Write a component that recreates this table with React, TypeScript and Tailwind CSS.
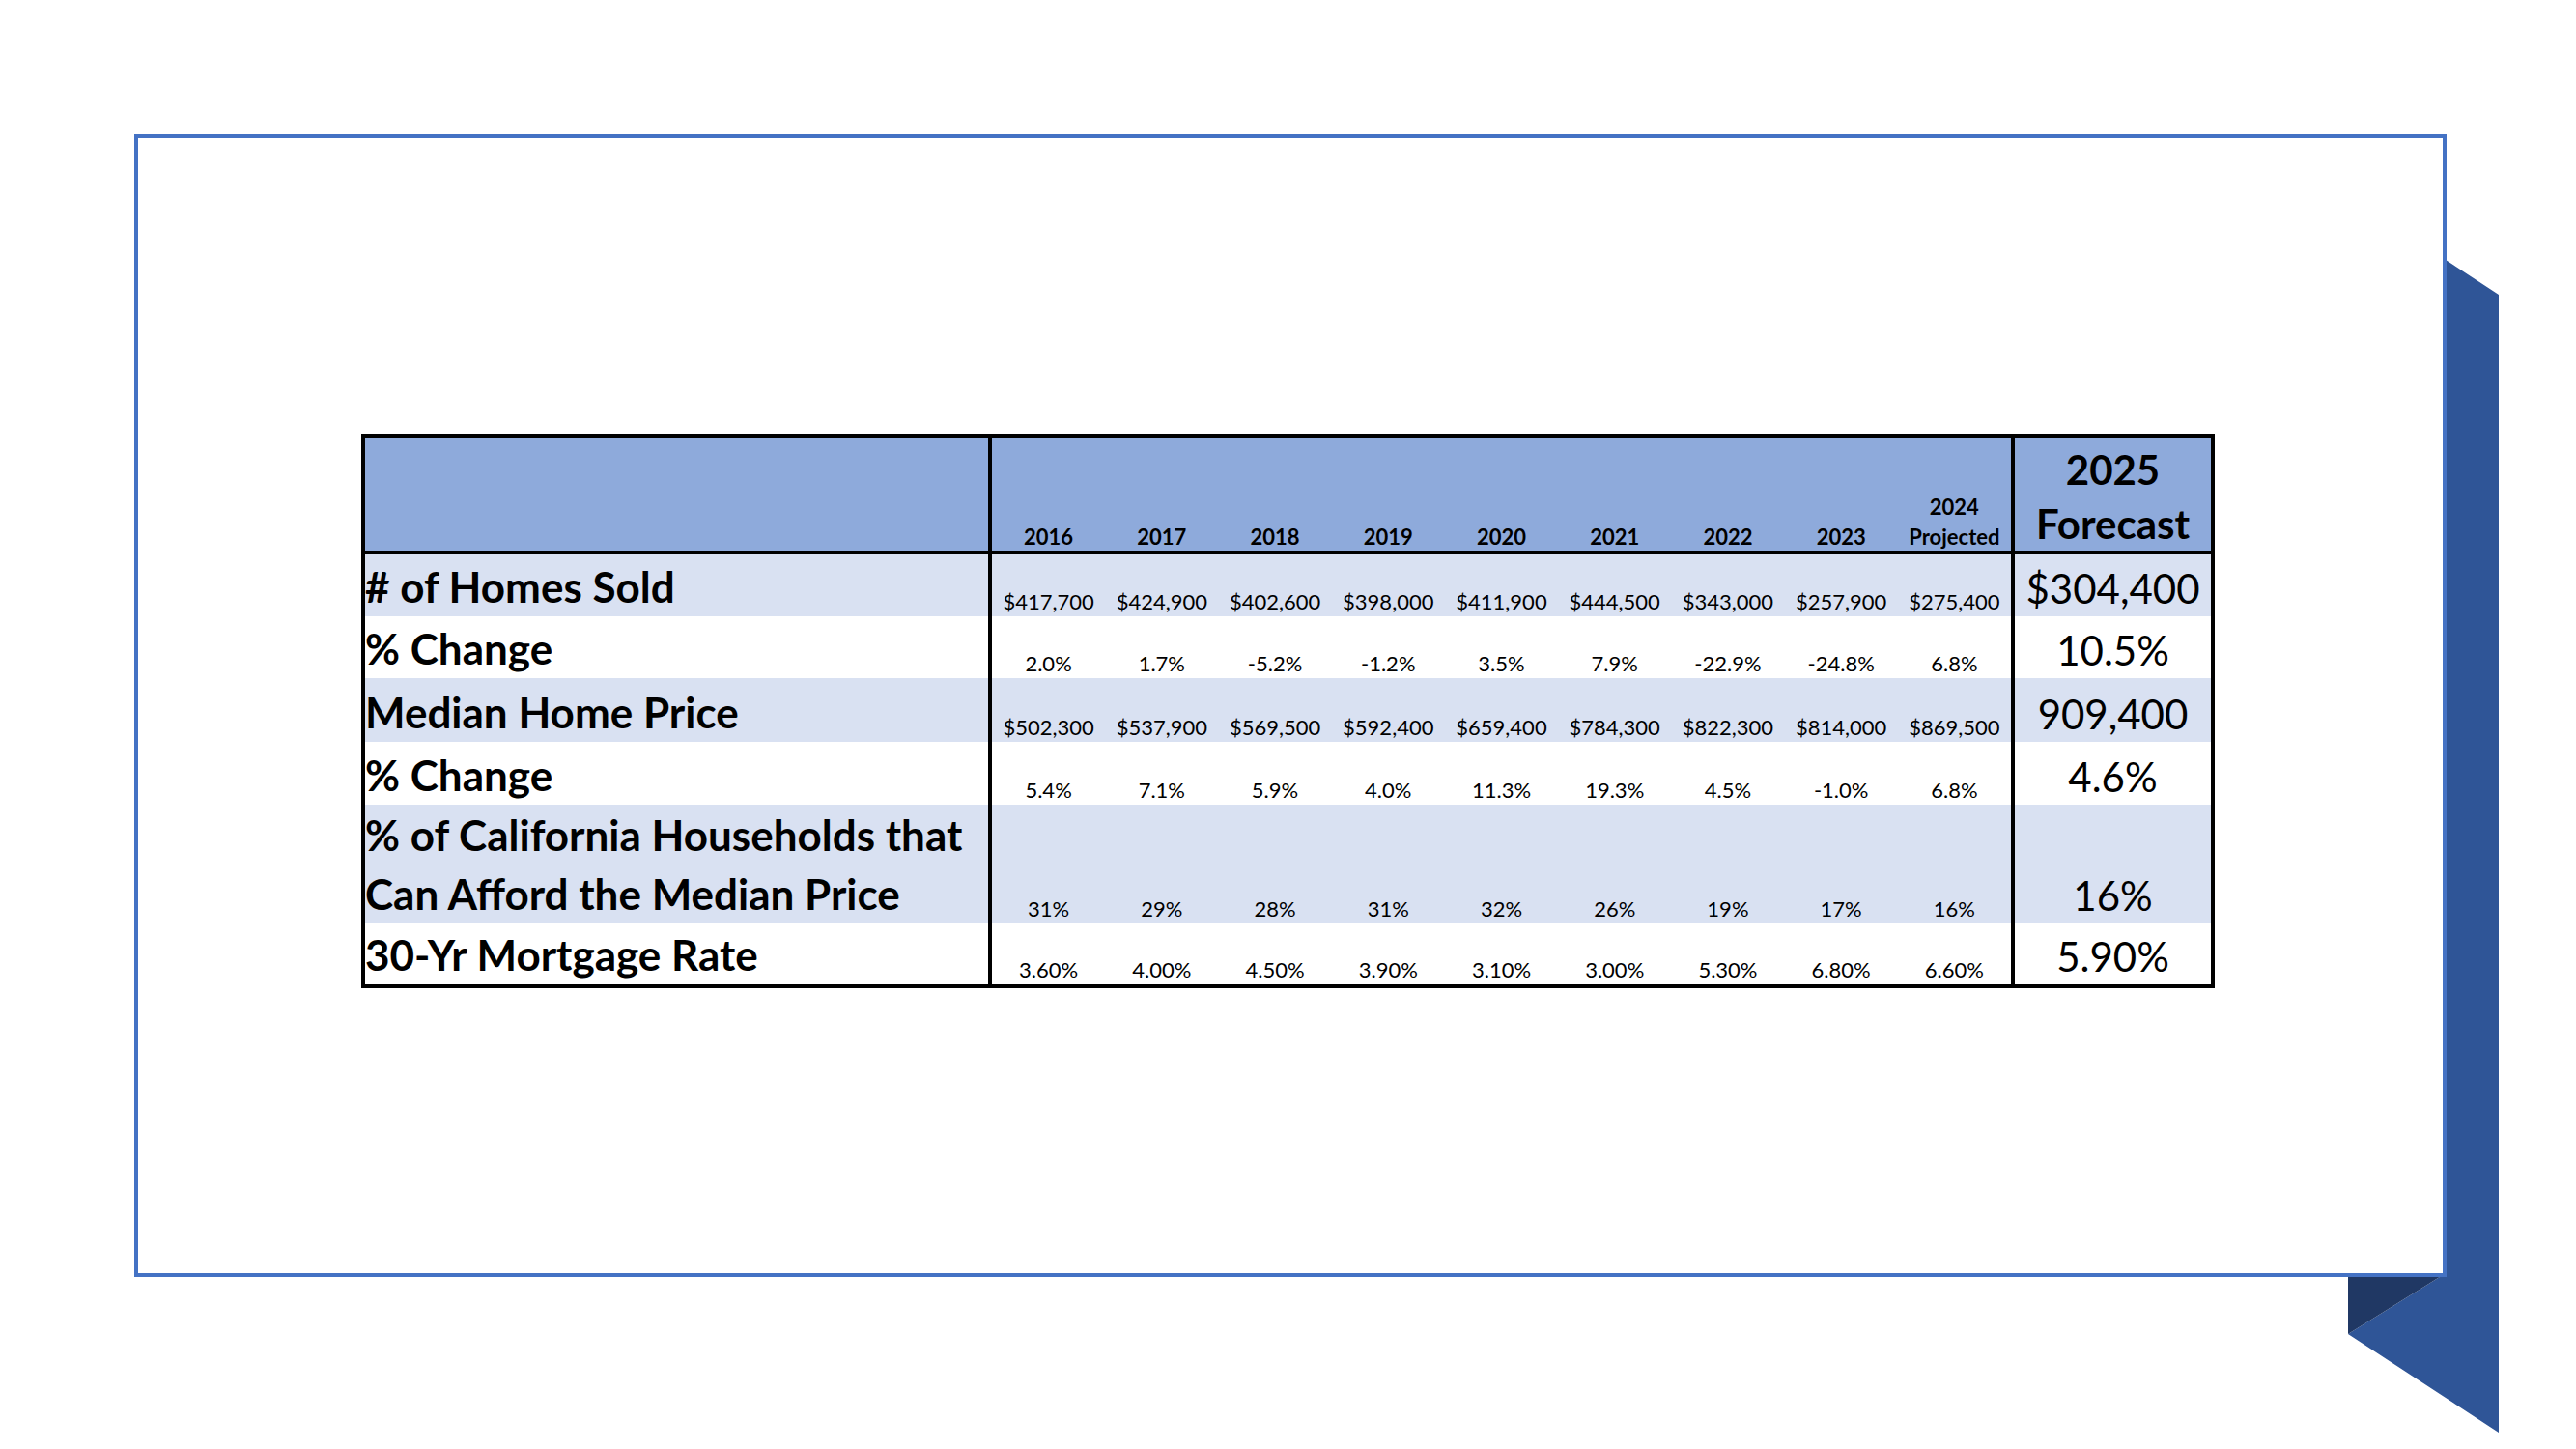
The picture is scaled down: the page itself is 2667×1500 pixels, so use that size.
import React from "react";

type Row = {
  label: string[];
  values: string[];
  forecast: string;
  bg: string;
  h: string;
};

const rows: Row[] = [
  {
    label: ["# of Homes Sold"],
    values: ["$417,700", "$424,900", "$402,600", "$398,000", "$411,900", "$444,500", "$343,000", "$257,900", "$275,400"],
    forecast: "$304,400",
    bg: "bg-[#d9e1f2]",
    h: "h-[64px]",
  },
  {
    label: ["% Change"],
    values: ["2.0%", "1.7%", "-5.2%", "-1.2%", "3.5%", "7.9%", "-22.9%", "-24.8%", "6.8%"],
    forecast: "10.5%",
    bg: "bg-white",
    h: "h-[64px]",
  },
  {
    label: ["Median Home Price"],
    values: ["$502,300", "$537,900", "$569,500", "$592,400", "$659,400", "$784,300", "$822,300", "$814,000", "$869,500"],
    forecast: "909,400",
    bg: "bg-[#d9e1f2]",
    h: "h-[66px]",
  },
  {
    label: ["% Change"],
    values: ["5.4%", "7.1%", "5.9%", "4.0%", "11.3%", "19.3%", "4.5%", "-1.0%", "6.8%"],
    forecast: "4.6%",
    bg: "bg-white",
    h: "h-[65px]",
  },
  {
    label: ["% of California Households that", "Can Afford the Median Price"],
    values: ["31%", "29%", "28%", "31%", "32%", "26%", "19%", "17%", "16%"],
    forecast: "16%",
    bg: "bg-[#d9e1f2]",
    h: "h-[123px]",
  },
  {
    label: ["30-Yr Mortgage Rate"],
    values: ["3.60%", "4.00%", "4.50%", "3.90%", "3.10%", "3.00%", "5.30%", "6.80%", "6.60%"],
    forecast: "5.90%",
    bg: "bg-white",
    h: "h-[63px]",
  },
];

const years = ["2016", "2017", "2018", "2019", "2020", "2021", "2022", "2023"];

function Divider() {
  return <div className="w-[4px] shrink-0 self-stretch bg-black" />;
}

export default function App() {
  return (
    <div className="relative w-[2667px] h-[1500px] overflow-hidden bg-white font-['Lato','Open_Sans',sans-serif] text-black">
      {/* ribbon drawing behind the frame */}
      <svg
        className="absolute left-0 top-0 z-0"
        width="2667"
        height="1500"
        viewBox="0 0 2667 1500"
      >
        <polygon
          points="2529,267 2587,305 2587,1483 2431,1381 2529,1320"
          fill="#2f5597"
        />
        <polygon points="2431,1320 2529,1320 2431,1381" fill="#203864" />
      </svg>

      <div className="relative z-10 pt-[139px] pl-[139px]">
        <div className="w-[2394px] h-[1183px] border-4 border-[#4472c4] bg-white pt-[306px] pl-[231px]">
          {/* table */}
          <div className="w-[1919px] border-4 border-black flex flex-col">
            {/* header */}
            <div className="flex h-[121px] bg-[#8eaadb] border-b-4 border-black">
              <div className="w-[645px] shrink-0" />
              <Divider />
              <div className="w-[1055px] shrink-0 grid grid-cols-9">
                {years.map((y) => (
                  <div key={y} className="flex items-end justify-center pb-[3px]">
                    <span className="text-[22px] leading-none font-bold">{y}</span>
                  </div>
                ))}
                <div className="flex flex-col items-center justify-end gap-[9px] pb-[3px]">
                  <span className="text-[22px] leading-none font-bold">2024</span>
                  <span className="text-[22px] leading-none font-bold">Projected</span>
                </div>
              </div>
              <Divider />
              <div className="w-[203px] shrink-0 flex flex-col items-center justify-end">
                <span className="text-[42px] leading-[56px] font-bold">2025</span>
                <span className="text-[42px] leading-[56px] font-bold">Forecast</span>
              </div>
            </div>

            {rows.map((r, i) => (
              <div key={i} className={`flex ${r.h}`}>
                <div className={`w-[645px] shrink-0 ${r.bg} flex flex-col justify-end`}>
                  {r.label.map((l) => (
                    <span key={l} className="text-[44px] leading-[61px] font-bold whitespace-nowrap">
                      {l}
                    </span>
                  ))}
                </div>
                <Divider />
                <div className={`w-[1055px] shrink-0 grid grid-cols-9 ${r.bg}`}>
                  {r.values.map((v, j) => (
                    <div key={j} className="flex items-end justify-center pb-[4px]">
                      <span className="text-[22px] leading-none whitespace-nowrap">{v}</span>
                    </div>
                  ))}
                </div>
                <Divider />
                <div className={`w-[203px] shrink-0 ${r.bg} flex items-end justify-center pb-[8px]`}>
                  <span className="text-[42px] leading-none whitespace-nowrap">{r.forecast}</span>
                </div>
              </div>
            ))}
          </div>
        </div>
      </div>
    </div>
  );
}
